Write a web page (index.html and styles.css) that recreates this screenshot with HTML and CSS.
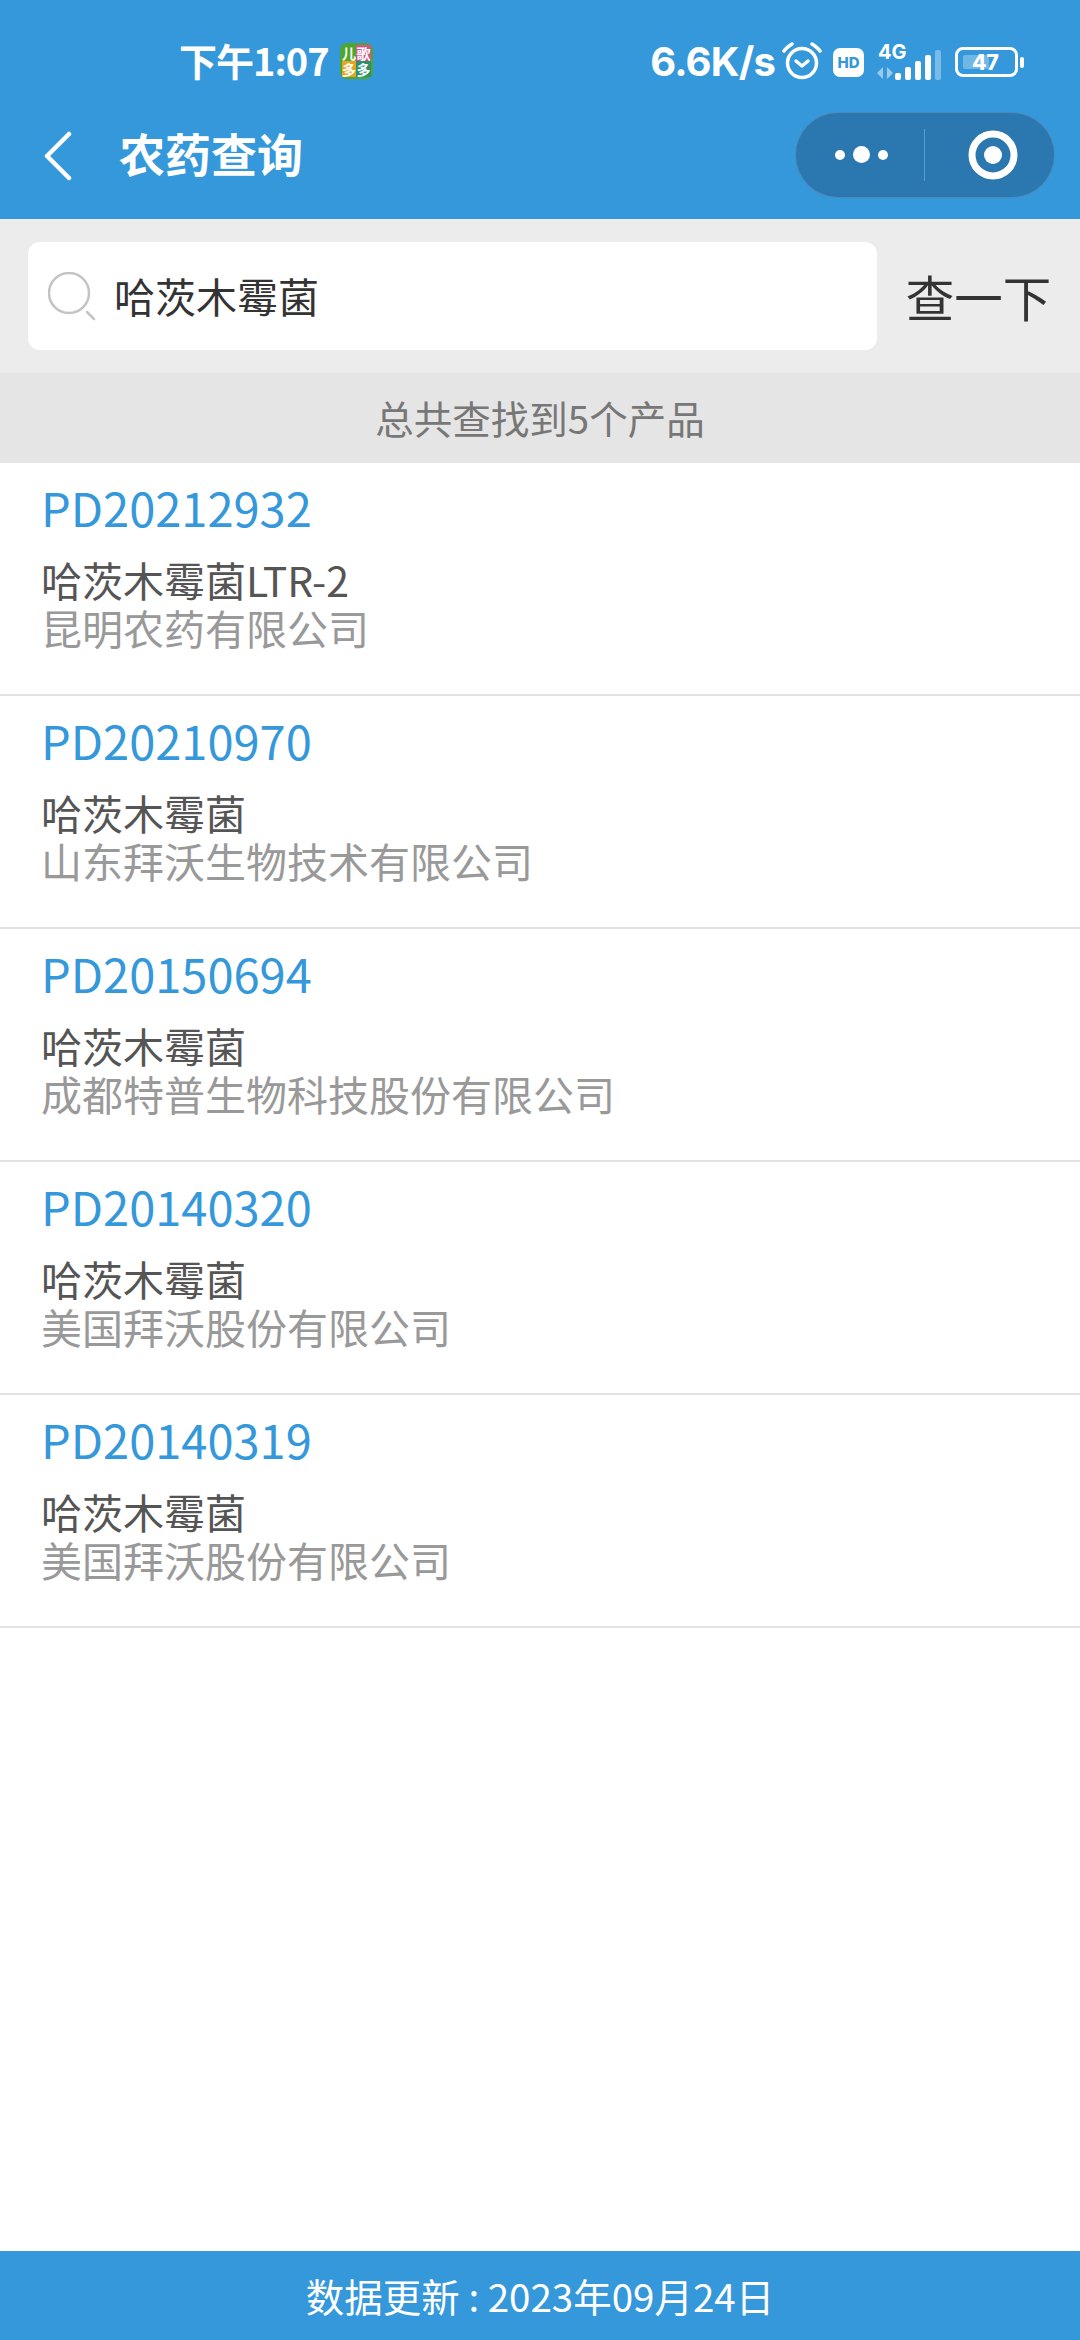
FILE: index.html
```html
<!DOCTYPE html>
<html lang="zh-CN">
<head>
  <meta charset="UTF-8">
  <meta name="viewport" content="width=device-width, initial-scale=1.0">
  <title>农药查询</title>
  <link rel="stylesheet" href="styles.css">
</head>
<body>
  <header class="topbar">
    <div class="status">
      <span class="time">下午1:07</span>
      <div class="app-badge">
        <span class="tl">儿</span><span class="tr">歌</span><span class="bl">多</span><span class="br">多</span>
      </div>
      <div class="status-right">
        <span class="speed">6.6K/s</span>
        <svg class="alarm" width="40" height="38" viewBox="0 0 40 38" fill="none" stroke="#fff" stroke-linecap="round">
          <circle cx="20" cy="21" r="14.500" stroke-width="3.500"/>
          <path d="M14 19l6 5 6-5" stroke-width="3.500" stroke-linejoin="round"/>
          <path d="M2 9C4 6 7 4 10 2M38 9C36 6 33 4 30 2" stroke-width="3.500"/>
        </svg>
        <span class="hd">HD</span>
        <div class="net">
          <span class="net-label">4G</span>
          <svg class="arrows" width="18" height="12" viewBox="0 0 18 12" fill="#fff" opacity="0.5">
            <path d="M7 0v12L1 6zM11 0l6 6-6 6z"/>
          </svg>
        </div>
        <div class="signal">
          <i class="b1"></i><i class="b2"></i><i class="b3"></i><i class="b4"></i><i class="b5"></i>
        </div>
        <div class="battery">
          <div class="battery-level"></div>
          <span class="battery-num">47</span>
        </div>
        <div class="battery-tip"></div>
      </div>
    </div>
    <nav class="nav">
      <svg class="back" width="28" height="50" viewBox="0 0 28 50" fill="none" stroke="#fff" stroke-width="4.500" stroke-linecap="round" stroke-linejoin="round">
        <path d="M25 3L3 25 25 47"/>
      </svg>
      <h1 class="title">农药查询</h1>
      <div class="capsule">
        <div class="capsule-more">
          <i class="dot"></i><i class="dot big"></i><i class="dot"></i>
        </div>
        <div class="capsule-line"></div>
        <div class="capsule-close">
          <svg width="50" height="50" viewBox="0 0 50 50">
            <circle cx="25" cy="25" r="21" fill="none" stroke="#fff" stroke-width="7"/>
            <circle cx="25" cy="25" r="9" fill="#fff"/>
          </svg>
        </div>
      </div>
    </nav>
  </header>

  <section class="search">
    <div class="search-box">
      <svg class="search-icon" width="50" height="50" viewBox="0 0 50 50" fill="none" stroke="#c4c4c4">
        <circle cx="21" cy="21" r="20" stroke-width="2.500"/>
        <path d="M39 40l7 7" stroke-width="2.500" stroke-linecap="round"/>
      </svg>
      <span class="search-text">哈茨木霉菌</span>
    </div>
    <div class="search-btn">查一下</div>
  </section>

  <div class="count">总共查找到5个产品</div>

  <main class="list">
    <div class="item">
      <div class="code">PD20212932</div>
      <div class="name">哈茨木霉菌LTR-2</div>
      <div class="company">昆明农药有限公司</div>
    </div>
    <div class="item">
      <div class="code">PD20210970</div>
      <div class="name">哈茨木霉菌</div>
      <div class="company">山东拜沃生物技术有限公司</div>
    </div>
    <div class="item">
      <div class="code">PD20150694</div>
      <div class="name">哈茨木霉菌</div>
      <div class="company">成都特普生物科技股份有限公司</div>
    </div>
    <div class="item">
      <div class="code">PD20140320</div>
      <div class="name">哈茨木霉菌</div>
      <div class="company">美国拜沃股份有限公司</div>
    </div>
    <div class="item">
      <div class="code">PD20140319</div>
      <div class="name">哈茨木霉菌</div>
      <div class="company">美国拜沃股份有限公司</div>
    </div>
  </main>

  <footer class="footer">数据更新 : 2023年09月24日</footer>
</body>
</html>
```

FILE: styles.css
```css
:root {
  --blue: #3498db;
  --cjk: "Noto Sans CJK SC", "Noto Sans", sans-serif;
}

* {
  box-sizing: border-box;
  margin: 0;
  padding: 0;
}

body {
  width: 1080px;
  min-height: 2340px;
  display: flex;
  flex-direction: column;
  background: #fff;
  font-family: var(--cjk);
}

/* Top bar */
.topbar {
  height: 219px;
  background: var(--blue);
  color: #fff;
}

.status {
  height: 90px;
  padding: 34px 0 0 179px;
  display: flex;
  align-items: center;
}

.time {
  font-size: 38px;
  font-weight: 700;
  line-height: 56px;
  letter-spacing: -1px;
  margin-top: -5px;
}

.app-badge {
  width: 33px;
  height: 36px;
  margin-left: 11px;
  margin-top: -3px;
  padding: 2px;
  border-radius: 7px;
  background: #4fa62f;
  display: grid;
  grid-template-columns: 1fr 1fr;
  grid-template-rows: 1fr 1fr;
  font-size: 14px;
  font-weight: 700;
  line-height: 16px;
  text-align: center;
  overflow: hidden;
}

.app-badge .tr { background: #d1558a; }
.app-badge .bl { background: #e6a420; }
.app-badge .br { background: #2c8f6d; }

.status-right {
  margin-left: auto;
  padding-right: 56px;
  display: flex;
  align-items: center;
}

.speed {
  font-family: Inter, sans-serif;
  font-size: 40px;
  font-weight: 700;
  line-height: 56px;
  letter-spacing: -0.8px;
}

.alarm {
  margin-left: 7px;
  margin-top: -3px;
}

.hd {
  width: 31px;
  height: 29px;
  margin-left: 11px;
  border-radius: 7px;
  background: #fff;
  color: var(--blue);
  font-family: Inter, sans-serif;
  font-size: 15px;
  font-weight: 800;
  line-height: 29px;
  text-align: center;
}

.net {
  width: 28px;
  margin-left: 14px;
  margin-top: -4px;
  display: flex;
  flex-direction: column;
  align-items: flex-start;
}

.net-label {
  font-family: Inter, sans-serif;
  font-size: 20px;
  font-weight: 700;
  line-height: 22px;
}

.arrows {
  margin-top: 4px;
  margin-left: -2px;
}

.signal {
  height: 30px;
  margin-left: -11px;
  margin-top: 6px;
  display: flex;
  align-items: flex-end;
  gap: 4px;
}

.signal i {
  width: 6px;
  border-radius: 2px;
  background: #fff;
}

.signal .b1 { height: 7px; }
.signal .b2 { height: 13px; }
.signal .b3 { height: 19px; }
.signal .b4 { height: 25px; }
.signal .b5 { height: 30px; opacity: 0.35; }

.battery {
  position: relative;
  width: 63px;
  height: 30px;
  margin-left: 14px;
  padding: 5px;
  border: 3px solid #fff;
  border-radius: 8px;
}

.battery-level {
  width: 26px;
  height: 100%;
  border-radius: 2px;
  background: rgba(255, 255, 255, 0.3);
}

.battery-num {
  position: absolute;
  left: 14px;
  top: 1px;
  font-family: Inter, sans-serif;
  font-size: 21px;
  font-weight: 800;
  line-height: 24px;
}

.battery-tip {
  width: 4px;
  height: 11px;
  margin-left: 2px;
  border-radius: 2px;
  background: #fff;
}

.nav {
  height: 129px;
  padding: 0 25px 0 44px;
  display: flex;
  align-items: center;
}

.back {
  margin-top: 2px;
}

.title {
  margin-left: 47px;
  margin-top: -6px;
  font-size: 46px;
  font-weight: 700;
  line-height: 64px;
}

.capsule {
  width: 260px;
  height: 86px;
  margin-left: auto;
  border: 1px solid rgba(255, 255, 255, 0.15);
  border-radius: 43px;
  background: #2b77af;
  display: flex;
  align-items: center;
}

.capsule-more {
  flex: 1;
  display: flex;
  align-items: center;
  justify-content: center;
  gap: 8px;
  padding-left: 2px;
}

.dot {
  width: 10px;
  height: 10px;
  border-radius: 50%;
  background: #fff;
}

.dot.big {
  width: 17px;
  height: 17px;
}

.capsule-line {
  width: 1px;
  height: 52px;
  background: rgba(255, 255, 255, 0.25);
}

.capsule-close {
  width: 129px;
  padding-left: 6px;
  display: flex;
  justify-content: center;
}

/* Search */
.search {
  height: 154px;
  padding: 23px 0 23px 28px;
  background: #ececec;
  display: flex;
  align-items: center;
}

.search-box {
  width: 849px;
  height: 108px;
  padding-left: 20px;
  border-radius: 12px;
  background: #fff;
  display: flex;
  align-items: center;
}

.search-icon {
  margin-top: 2px;
}

.search-text {
  margin-left: 16px;
  margin-top: -2px;
  font-size: 41px;
  color: #333;
}

.search-btn {
  flex: 1;
  font-size: 48.500px;
  color: #333;
  text-align: center;
}

.count {
  height: 90px;
  background: #e5e5e5;
  color: #777;
  font-size: 38.500px;
  line-height: 88px;
  text-align: center;
}

/* Result list */
.list {
  flex: 1;
}

.item {
  height: 233px;
  padding: 9px 41px 0;
  border-bottom: 2px solid #e2e2e2;
}

.code {
  color: var(--blue);
  font-size: 47px;
  line-height: 70px;
}

.name {
  margin-top: 13px;
  color: #555;
  font-size: 41px;
  line-height: 48px;
}

.company {
  color: #999;
  font-size: 41px;
  line-height: 48px;
}

.footer {
  height: 89px;
  background: var(--blue);
  color: #fff;
  font-size: 38.500px;
  line-height: 89px;
  text-align: center;
}
```
